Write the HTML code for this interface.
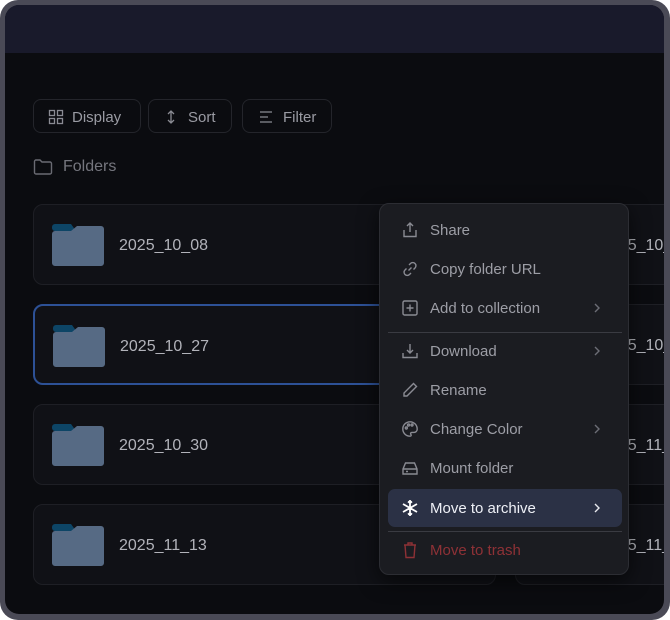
<!DOCTYPE html>
<html><head><style>
*{margin:0;padding:0;box-sizing:border-box}
body{width:670px;height:620px;background:#fff;font-family:"Liberation Sans",sans-serif;overflow:hidden}
.frame{position:absolute;left:0;top:0;width:670px;height:620px;background:#4a4a56;border-radius:18px}
.inner{position:absolute;left:5px;top:5px;width:659px;height:609px;background:#0b0c10;border-radius:14px;overflow:hidden}
.head{position:absolute;left:0;top:0;width:100%;height:48px;background:#191a2b}
.btn{position:absolute;top:94px;height:34px;border:1px solid #24252b;border-radius:8px;color:#9a9ba3;font-size:15px;display:flex;align-items:center;gap:8px;padding-left:14px;padding-top:2px}
.btn svg{stroke:#8a8b93;fill:none;stroke-width:1.3}
.lbl{position:absolute;left:28px;top:153px;color:#75767e;font-size:16px;display:flex;align-items:center;gap:10px}
.card{position:absolute;height:81px;border:1px solid #1e1f25;border-radius:10px;background:#101116}
.card.sel{border:2px solid #2d5196}
.card .name{position:absolute;left:85px;top:32px;color:#b2b3ba;font-size:16px}
.card .ic{position:absolute;left:18px;top:19px}
.card2 .name{left:85px;color:#b2b3ba;position:absolute;top:32px;font-size:16px}
.menu{position:absolute;left:374px;top:198px;width:250px;height:372px;background:#1b1c21;border:1px solid #2c2d33;border-radius:10px;box-shadow:0 6px 20px rgba(0,0,0,.6)}
.it{position:absolute;left:8px;width:234px;height:38px;display:flex;align-items:center;padding-left:13px;color:#9d9ea6;font-size:15px;border-radius:7px}
.it svg{width:18px;height:18px;margin-right:11px;stroke:#8a8b93;fill:none;stroke-width:1.4}
.it .ch{position:absolute;right:18px;top:12px;width:14px;height:14px}
.it .ch svg{width:14px;height:14px;stroke:#6c6d75}
.sep{position:absolute;left:8px;width:234px;height:1px;background:#3a3b42}
.hl{background:#2b3145;color:#eef0f6}
.hl .ch svg{stroke:#e8e9ee}
</style></head><body>
<div class="frame"><div class="inner">
<div class="head"></div>
<div class="btn" style="left:28px;width:108px"><svg width="16" height="16" viewBox="0 0 16 16"><rect x="1.5" y="1.5" width="5" height="5"/><rect x="9.5" y="1.5" width="5" height="5"/><rect x="1.5" y="9.5" width="5" height="5"/><rect x="9.5" y="9.5" width="5" height="5"/></svg>Display</div>
<div class="btn" style="left:143px;width:84px;padding-left:17px;gap:12px"><svg width="10" height="16" viewBox="0 0 10 16"><path d="M5 2v12M2 5l3-3 3 3M2 11l3 3 3-3"/></svg>Sort</div>
<div class="btn" style="left:237px;width:90px;padding-left:16px;gap:10px"><svg width="14" height="14" viewBox="0 0 14 14"><path d="M1 2h12M1 7h8M1 12h12"/></svg>Filter</div>
<div class="lbl"><svg width="20" height="18" viewBox="0 0 20 18" fill="none" stroke="#6a6b73" stroke-width="1.4"><path d="M1.5 3.5a1.5 1.5 0 0 1 1.5-1.5h4l2 2h8a1.5 1.5 0 0 1 1.5 1.5v9a1.5 1.5 0 0 1-1.5 1.5H3a1.5 1.5 0 0 1-1.5-1.5z"/></svg>Folders</div>

<div class="card" style="left:28px;top:199px;width:463px"><svg class="ic" width="52" height="42" viewBox="0 0 52 42"><path d="M3 0h16l5 7H3a3 3 0 0 1-3-3V3a3 3 0 0 1 3-3z" fill="#0d4566"/><path d="M3 7h16l6-5h24a3 3 0 0 1 3 3v34a3 3 0 0 1-3 3H3a3 3 0 0 1-3-3V10a3 3 0 0 1 3-3z" fill="#566a84"/></svg><div class="name">2025_10_08</div></div>
<div class="card sel" style="left:28px;top:299px;width:463px"><svg class="ic" width="52" height="42" viewBox="0 0 52 42"><path d="M3 0h16l5 7H3a3 3 0 0 1-3-3V3a3 3 0 0 1 3-3z" fill="#0d4566"/><path d="M3 7h16l6-5h24a3 3 0 0 1 3 3v34a3 3 0 0 1-3 3H3a3 3 0 0 1-3-3V10a3 3 0 0 1 3-3z" fill="#566a84"/></svg><div class="name">2025_10_27</div></div>
<div class="card" style="left:28px;top:399px;width:463px"><svg class="ic" width="52" height="42" viewBox="0 0 52 42"><path d="M3 0h16l5 7H3a3 3 0 0 1-3-3V3a3 3 0 0 1 3-3z" fill="#0d4566"/><path d="M3 7h16l6-5h24a3 3 0 0 1 3 3v34a3 3 0 0 1-3 3H3a3 3 0 0 1-3-3V10a3 3 0 0 1 3-3z" fill="#566a84"/></svg><div class="name">2025_10_30</div></div>
<div class="card" style="left:28px;top:499px;width:463px"><svg class="ic" width="52" height="42" viewBox="0 0 52 42"><path d="M3 0h16l5 7H3a3 3 0 0 1-3-3V3a3 3 0 0 1 3-3z" fill="#0d4566"/><path d="M3 7h16l6-5h24a3 3 0 0 1 3 3v34a3 3 0 0 1-3 3H3a3 3 0 0 1-3-3V10a3 3 0 0 1 3-3z" fill="#566a84"/></svg><div class="name">2025_11_13</div></div>

<div class="card card2" style="left:510px;top:199px;width:200px"><div class="name">2025_10_17</div></div>
<div class="card card2" style="left:510px;top:299px;width:200px"><div class="name">2025_10_28</div></div>
<div class="card card2" style="left:510px;top:399px;width:200px"><div class="name">2025_11_01</div></div>
<div class="card card2" style="left:510px;top:499px;width:200px"><div class="name">2025_11_14</div></div>

<div class="menu">
<div class="it" style="top:7px"><svg viewBox="0 0 18 18"><path d="M9 11V2M6 5l3-3 3 3M3 9v6.5h12V9"/></svg>Share</div>
<div class="it" style="top:46px"><svg viewBox="0 0 18 18"><path d="M7.5 10.5l3-3M8 5l1.5-1.5a3 3 0 0 1 4.5 4.5L12.5 9.5M10 13l-1.5 1.5a3 3 0 0 1-4.5-4.5L5.5 8.5"/></svg>Copy folder URL</div>
<div class="it" style="top:85px"><svg viewBox="0 0 18 18"><rect x="2" y="2" width="14" height="14" rx="1.5"/><path d="M9 5.5v7M5.5 9h7"/></svg>Add to collection<span class="ch"><svg viewBox="0 0 14 14"><path d="M5 3l4 4-4 4"/></svg></span></div>
<div class="sep" style="top:128px"></div>
<div class="it" style="top:128px"><svg viewBox="0 0 18 18"><path d="M9 2v9M6 8l3 3 3-3M2 11v4.5h14V11"/></svg>Download<span class="ch"><svg viewBox="0 0 14 14"><path d="M5 3l4 4-4 4"/></svg></span></div>
<div class="it" style="top:167px"><svg viewBox="0 0 18 18"><path d="M12.5 2.5l3 3L6 15H3v-3z"/></svg>Rename</div>
<div class="it" style="top:206px"><svg viewBox="0 0 18 18"><path d="M9 1.8a7.2 7.2 0 1 0 0 14.4c1.2 0 1.5-1 .9-1.8-.7-.9-.2-2 1-2H13a3.2 3.2 0 0 0 3.2-3.2C16.2 5 13 1.8 9 1.8z"/><circle cx="5.3" cy="8" r="1"/><circle cx="7.5" cy="5" r="1"/><circle cx="11" cy="5" r="1"/></svg>Change Color<span class="ch"><svg viewBox="0 0 14 14"><path d="M5 3l4 4-4 4"/></svg></span></div>
<div class="it" style="top:245px"><svg viewBox="0 0 18 18"><path d="M2 10l2.5-6h9L16 10v5H2zM2 10h14M5 12.5h2"/></svg>Mount folder</div>
<div class="it hl" style="top:285px"><svg viewBox="0 0 18 18" style="stroke:#fff;stroke-width:1.8"><path d="M9 1v16M2 5l14 8M2 13l14-8M7 2.5l2 1.5 2-1.5M7 15.5l2-1.5 2 1.5"/></svg>Move to archive<span class="ch"><svg viewBox="0 0 14 14"><path d="M5 3l4 4-4 4"/></svg></span></div>
<div class="sep" style="top:327px"></div>
<div class="it" style="top:327px;color:#8e3136"><svg viewBox="0 0 18 18" style="stroke:#8e3136"><path d="M3 4h12M7 4V2h4v2M4 4l1 12.5h8L14 4"/></svg>Move to trash</div>
</div>
</div></div>
</body></html>
